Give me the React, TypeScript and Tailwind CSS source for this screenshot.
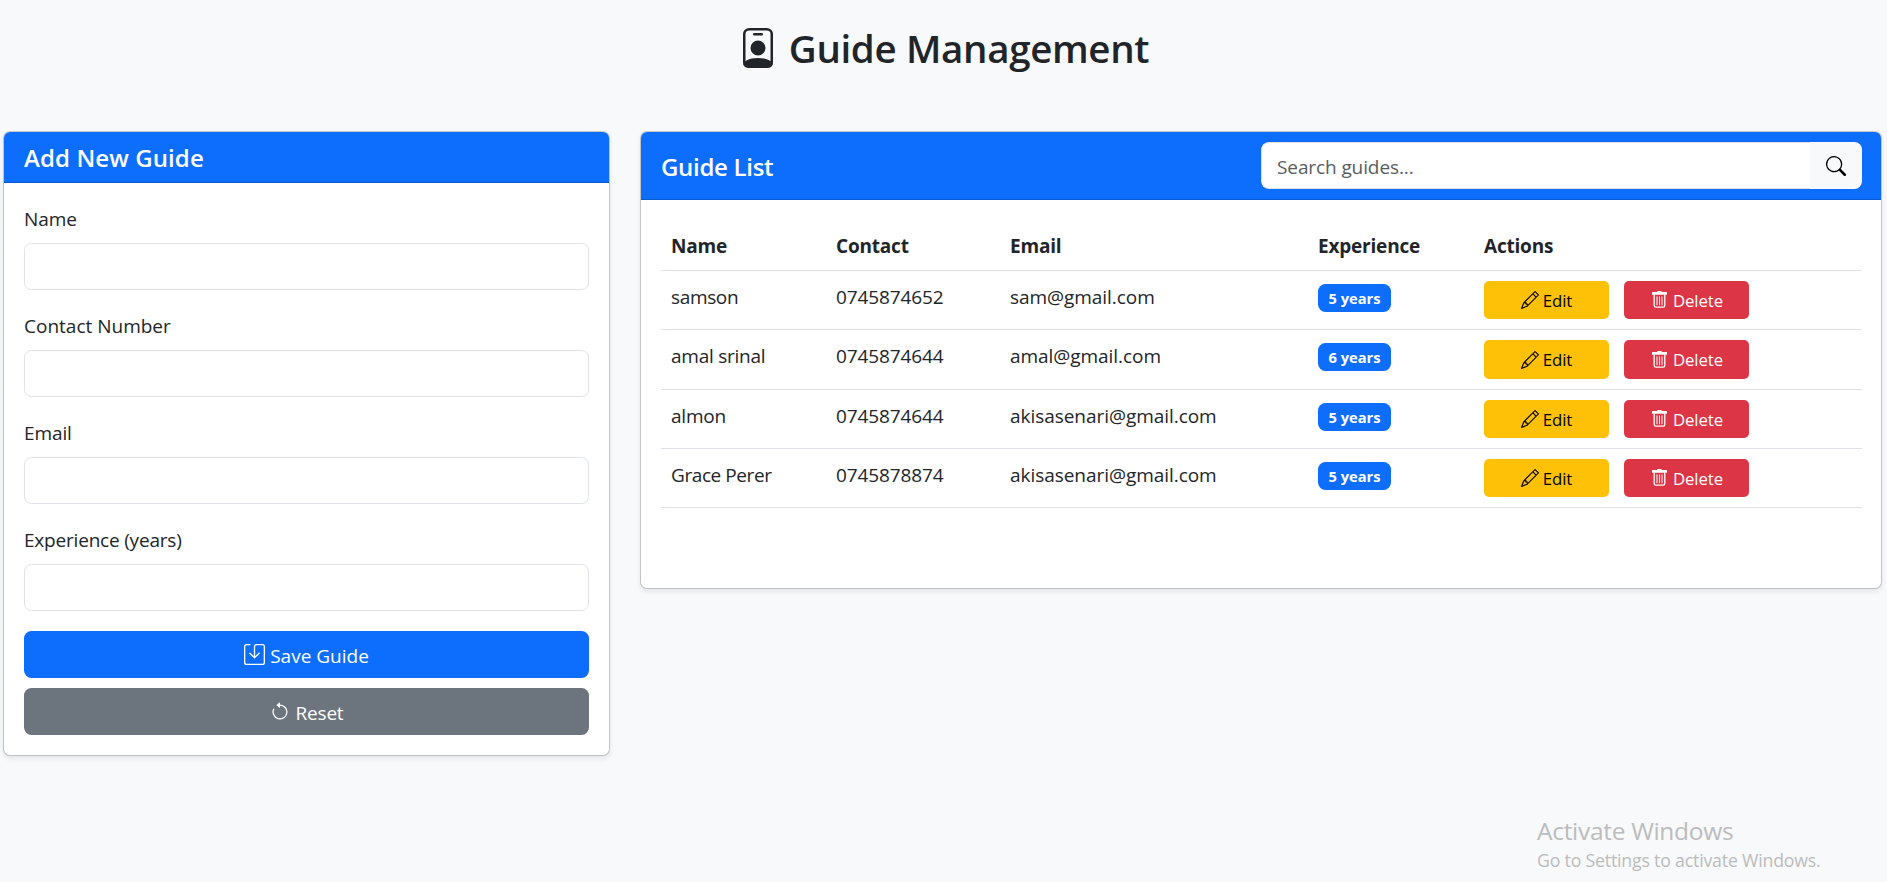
import { ReactNode } from "react";
import {
  BsArrowCounterclockwise,
  BsPencil,
  BsPersonBadge,
  BsSave,
  BsSearch,
} from "react-icons/bs";

const guides = [
  { name: "samson", contact: "0745874652", email: "sam@gmail.com", years: 5, row: "h-[59px]", button: "h-[38px]", spacing: "tracking-[-0.35px]" },
  { name: "amal srinal", contact: "0745874644", email: "amal@gmail.com", years: 6, row: "h-[60px]", button: "h-[39px]", spacing: "tracking-[-0.25px]" },
  { name: "almon", contact: "0745874644", email: "akisasenari@gmail.com", years: 5, row: "h-[59px]", button: "h-[38px]", spacing: "tracking-[-0.2px]" },
  { name: "Grace Perer", contact: "0745878874", email: "akisasenari@gmail.com", years: 5, row: "h-[59px]", button: "h-[38px]", spacing: "tracking-[-0.42px]" },
];

const fields = [
  { label: "Name", spacing: "tracking-[-0.1px]" },
  { label: "Contact Number", spacing: "" },
  { label: "Email", spacing: "tracking-[-0.1px]" },
  { label: "Experience (years)", spacing: "tracking-[-0.2px]" },
];

const columns = "grid grid-cols-[165px_174px_308px_166px_1fr] border-b border-[#dee2e6]";

function Card({ className, children }: { className: string; children: ReactNode }) {
  return (
    <section
      className={`flex flex-col overflow-hidden rounded-[7px] border border-black/[0.175] bg-white bg-clip-padding shadow-[0_2.5px_5px_rgba(0,0,0,0.075)] ${className}`}
    >
      {children}
    </section>
  );
}

function TrashIcon() {
  return (
    <svg viewBox="0 0 15 17" className="mr-[2px] mb-px h-[17px] w-[15px]" fill="none" stroke="currentColor">
      <path d="M0.5 1h4.5L5.6 0h3.8l.6 1h4.5a.5.5 0 0 1 .5.5V3.3a.5.5 0 0 1-.5.5H.5a.5.5 0 0 1-.5-.5V1.5a.5.5 0 0 1 .5-.5z" fill="currentColor" stroke="none" />
      <path d="M2.2 3.5v11a1.7 1.7 0 0 0 1.7 1.7h7.2a1.7 1.7 0 0 0 1.7-1.7v-11" strokeWidth="1.3" />
      <path d="M5 5.8v8M7.5 5.8v8M10 5.8v8" strokeWidth="1" strokeLinecap="round" />
    </svg>
  );
}

export default function App() {
  return (
    <div className="flex h-[882px] w-full flex-col overflow-hidden bg-[#f8f9fa] font-['Open_Sans',sans-serif] text-[19px] leading-[30px] text-[#212529]">
      <h1 className="flex h-[131px] items-start justify-center pt-[24px] text-[38.5px] leading-[48px] font-semibold tracking-[-0.35px]">
        <BsPersonBadge className="mt-[4px] mr-[11px] size-[40px]" />
        <span>Guide Management</span>
      </h1>

      <main className="flex items-start pl-[3px]">
        <Card className="w-[607px]">
          <h2 className="h-[51px] border-b border-black/[0.175] bg-[#0d6efd] px-5 pt-[11px] text-[24px] leading-[30px] font-semibold tracking-[0.1px] text-white">
            <span>Add New Guide</span>
          </h2>
          <form className="flex flex-col p-5">
            {fields.map((field) => (
              <label key={field.label} className="mb-5 flex flex-col gap-[9px] pt-px">
                <span className={field.spacing}>{field.label}</span>
                <input className="h-[47px] rounded-[7.5px] border border-[#dee2e6] bg-white px-[15px] outline-none" />
              </label>
            ))}
            <button
              type="button"
              className="flex h-[47px] items-center justify-center gap-[5px] rounded-[7.5px] bg-[#0d6efd] text-white"
            >
              <BsSave className="size-[21px]" />
              <span className="pt-[2px]">Save Guide</span>
            </button>
            <button
              type="button"
              className="mt-2.5 flex h-[47px] items-center justify-center gap-[6px] rounded-[7.5px] bg-[#6c757d] text-white"
            >
              <BsArrowCounterclockwise className="size-[20px]" />
              <span className="pt-[2px] tracking-[-0.2px]">Reset</span>
            </button>
          </form>
        </Card>

        <Card className="ml-[30px] h-[458px] w-[1242px]">
          <div className="flex h-[68px] items-center justify-between border-b border-black/[0.175] bg-[#0d6efd] pr-[19px] pl-5">
            <h2 className="pt-[2px] text-[24px] leading-[30px] font-semibold tracking-[-0.3px] text-white">
              <span>Guide List</span>
            </h2>
            <div className="flex h-[47px] w-[601px] overflow-hidden rounded-[7.5px]">
              <input
                placeholder="Search guides..."
                className="min-w-0 flex-1 rounded-l-[7.5px] border border-r-0 border-[#dee2e6] bg-white px-[15px] pt-[2px] tracking-[-0.1px] outline-none placeholder:text-[#595c5f]"
              />
              <button type="button" className="flex w-[52px] items-center justify-center bg-[#f8f9fa] text-black">
                <BsSearch className="size-[20px]" />
              </button>
            </div>
          </div>
          <div className="py-5 pr-[19px] pl-5">
            <div className={`${columns} h-[51px] pt-[11px] font-bold tracking-[-0.2px]`}>
              {["Name", "Contact", "Email", "Experience", "Actions"].map((title) => (
                <div key={title} className="px-2.5">
                  <span>{title}</span>
                </div>
              ))}
            </div>
            {guides.map((guide) => (
              <div key={guide.name} className={`${columns} ${guide.row} items-start pt-2.5`}>
                <div className={`px-2.5 pt-px ${guide.spacing}`}>
                  <span>{guide.name}</span>
                </div>
                <div className="px-2.5 pt-px tracking-[-0.1px]">
                  <span>{guide.contact}</span>
                </div>
                <div className="px-2.5 pt-px tracking-[-0.05px]">
                  <span>{guide.email}</span>
                </div>
                <div className="px-2.5 pt-[3px]">
                  <div className="flex h-[28px] w-[73px] items-center justify-center rounded-[7.5px] bg-[#0d6efd] text-[14.7px] font-bold text-white">
                    <span>{guide.years} years</span>
                  </div>
                </div>
                <div className="flex gap-[15px] px-2.5 text-[16.8px]">
                  <button
                    type="button"
                    className={`flex w-[125px] items-center justify-center gap-[4px] rounded-[5px] bg-[#ffc107] text-black ${guide.button}`}
                  >
                    <BsPencil className="size-[18px]" />
                    <span className="pt-px tracking-[-0.1px]">Edit</span>
                  </button>
                  <button
                    type="button"
                    className={`flex w-[125px] items-center justify-center gap-[4px] rounded-[5px] bg-[#dc3545] pl-[2px] text-white ${guide.button}`}
                  >
                    <TrashIcon />
                    <span className="pt-px tracking-[-0.1px]">Delete</span>
                  </button>
                </div>
              </div>
            ))}
          </div>
        </Card>
      </main>

      <aside className="mt-auto ml-[1537px] flex h-[68px] flex-col text-[#bbbcbd]">
        <span className="text-[24.5px] leading-[34px] tracking-[-0.3px]">Activate Windows</span>
        <span className="-mt-px text-[17.7px] leading-[26px] tracking-[-0.18px]">Go to Settings to activate Windows.</span>
      </aside>
    </div>
  );
}
